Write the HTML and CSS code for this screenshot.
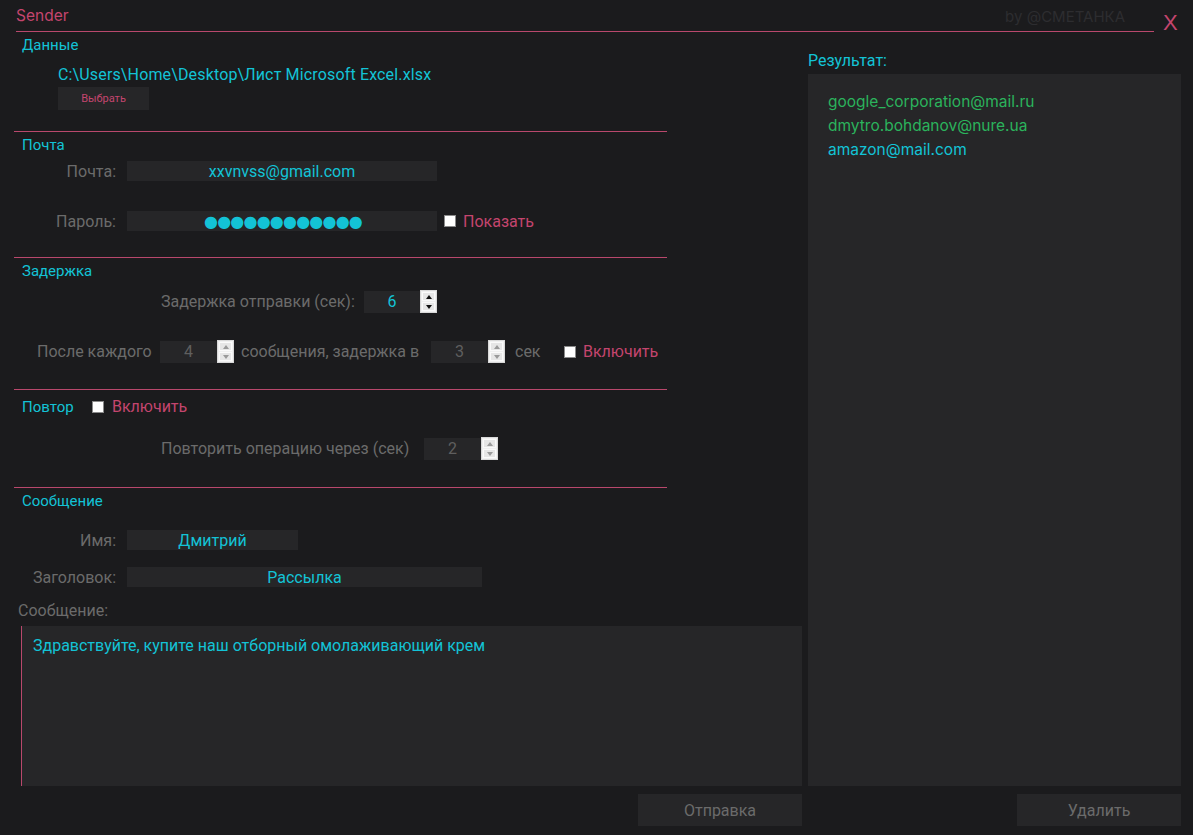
FILE: index.html
```html
<!DOCTYPE html>
<html lang="ru">
<head>
<meta charset="utf-8">
<title>Sender</title>
<link rel="stylesheet" href="styles.css">
</head>
<body>
<div class="app">
  <header class="header">
    <div class="title-block">
      <span class="title">Sender</span>
      <span class="author">by @СМЕТАНКА</span>
    </div>
    <div class="close">X</div>
  </header>
  <div class="main">
    <div class="left">
      <section class="section sec-data">
        <div class="heading">Данные</div>
        <div class="path">C:\Users\Home\Desktop\Лист Microsoft Excel.xlsx</div>
        <div class="btn-choose">Выбрать</div>
      </section>

      <section class="section sec-mail">
        <div class="heading">Почта</div>
        <div class="frow r-mail">
          <div class="flabel">Почта:</div>
          <div class="field w310">xxvnvss@gmail.com</div>
        </div>
        <div class="frow r-pass">
          <div class="flabel">Пароль:</div>
          <div class="field w310 dots">●●●●●●●●●●●●</div>
          <div class="check"></div>
          <div class="pink-label">Показать</div>
        </div>
      </section>

      <section class="section sec-delay">
        <div class="heading">Задержка</div>
        <div class="frow r-delay1">
          <div class="glabel w203">Задержка отправки (сек):</div>
          <div class="num w56 active">6</div>
          <div class="spin"><span class="up"></span><span class="down"></span></div>
        </div>
        <div class="frow r-delay2">
          <div class="glabel w123">После каждого</div>
          <div class="num w57">4</div>
          <div class="spin off"><span class="up"></span><span class="down"></span></div>
          <div class="glabel w190 ml7">сообщения, задержка в</div>
          <div class="num w57">3</div>
          <div class="spin off"><span class="up"></span><span class="down"></span></div>
          <div class="glabel w42 ml10">сек</div>
          <div class="check"></div>
          <div class="pink-label">Включить</div>
        </div>
      </section>

      <section class="section sec-repeat">
        <div class="frow r-rephead">
          <div class="heading inline">Повтор</div>
          <div class="check"></div>
          <div class="pink-label">Включить</div>
        </div>
        <div class="frow r-repeat">
          <div class="glabel w263">Повторить операцию через (сек)</div>
          <div class="num w57">2</div>
          <div class="spin off"><span class="up"></span><span class="down"></span></div>
        </div>
      </section>

      <section class="section sec-msg">
        <div class="heading">Сообщение</div>
        <div class="frow r-name">
          <div class="flabel">Имя:</div>
          <div class="field w171">Дмитрий</div>
        </div>
        <div class="frow r-subject">
          <div class="flabel">Заголовок:</div>
          <div class="field w355">Рассылка</div>
        </div>
      </section>
      <div class="msg-label">Сообщение:</div>
      <div class="textarea">Здравствуйте, купите наш отборный омолаживающий крем</div>
      <div class="btn-row">
        <div class="btn">Отправка</div>
      </div>
    </div>

    <div class="right">
      <div class="res-label">Результат:</div>
      <div class="res-panel">
        <div class="res-item ok">google_corporation@mail.ru</div>
        <div class="res-item ok">dmytro.bohdanov@nure.ua</div>
        <div class="res-item cur">amazon@mail.com</div>
      </div>
      <div class="btn-row">
        <div class="btn">Удалить</div>
      </div>
    </div>
  </div>
</div>
</body>
</html>
```

FILE: styles.css
```css
* { box-sizing: border-box; }

html, body {
  margin: 0;
  padding: 0;
  background: #1b1b1d;
}

body {
  width: 1193px;
  height: 835px;
  overflow: hidden;
  font-family: Roboto, "Liberation Sans", sans-serif;
  font-size: 16px;
  color: #6b6b6b;
}

.app {
  width: 1193px;
  height: 835px;
}

/* header */
.header {
  display: flex;
  padding-left: 16px;
  height: 32px;
}

.title-block {
  width: 1138px;
  height: 32px;
  border-bottom: 1px solid #b9486c;
  display: flex;
  justify-content: space-between;
  padding-top: 6px;
  padding-right: 29px;
}

.title {
  color: #c4456e;
  font-family: Inter, Roboto, sans-serif;
  font-size: 15.5px;
  line-height: 20px;
}

.author {
  color: #2d2d30;
  font-family: Inter, Roboto, sans-serif;
  font-size: 15px;
  line-height: 20px;
  padding-top: 1px;
}

.close {
  color: #c4456e;
  font-size: 22px;
  line-height: 24px;
  margin-left: 9px;
  padding-top: 11px;
  font-family: "Liberation Sans", sans-serif;
}

/* layout */
.main {
  display: flex;
  gap: 6px;
}

.left {
  width: 802px;
}

.right {
  width: 373px;
}

.section {
  margin-left: 14px;
  width: 653px;
  border-bottom: 1px solid #b9486c;
}

.heading {
  color: #13c3d6;
  font-size: 15px;
  line-height: 18px;
  padding-left: 8px;
}

.heading.inline {
  padding-left: 0;
  width: 70px;
}

.frow {
  display: flex;
  align-items: center;
}

.flabel {
  width: 102px;
  margin-right: 11px;
  text-align: right;
  color: #6b6b6b;
}

.glabel {
  color: #6b6b6b;
  white-space: nowrap;
}

.field {
  height: 20px;
  background: #262628;
  color: #13c3d6;
  display: flex;
  align-items: center;
  justify-content: center;
}

.w310 { width: 310px; }
.w171 { width: 171px; }
.w355 { width: 355px; }
.w203 { width: 203px; }
.w123 { width: 123px; }
.w190 { width: 190px; }
.w42 { width: 42px; }
.w263 { width: 263px; }
.w56 { width: 56px; }
.w57 { width: 57px; }
.ml7 { margin-left: 7px; }
.ml10 { margin-left: 10px; }

.dots {
  font-family: "DejaVu Sans", sans-serif;
  font-size: 16px;
  letter-spacing: -0.8px;
  padding-top: 1px;
  padding-left: 2px;
}

.check {
  width: 12px;
  height: 12px;
  background: #ffffff;
  border: 1px solid #8a8a8a;
  margin-left: 7px;
}

.pink-label {
  color: #c4456e;
  margin-left: 7px;
}

.num {
  height: 22px;
  background: #262628;
  color: #5f5f5f;
  font-size: 16px;
  display: flex;
  align-items: center;
  justify-content: center;
}

.num.active {
  color: #13c3d6;
}

.spin {
  width: 17px;
  height: 23px;
  background: #f0f0f0;
  border: 1px solid #d9d9d9;
  display: flex;
  flex-direction: column;
  padding: 1px;
  gap: 1px;
}

.spin span {
  flex: 1;
  background: #e6e6e6;
  border: 1px solid #fafafa;
  display: flex;
  align-items: center;
  justify-content: center;
}

.spin span::after {
  content: "";
  width: 0;
  height: 0;
  border-left: 3px solid transparent;
  border-right: 3px solid transparent;
}

.spin .up::after { border-bottom: 4px solid #111; }
.spin .down::after { border-top: 4px solid #111; }
.spin.off .up::after { border-bottom-color: #9a9a9a; }
.spin.off .down::after { border-top-color: #9a9a9a; }

/* sections */
.sec-data {
  height: 100px;
  padding-top: 4px;
}

.path {
  color: #13c3d6;
  line-height: 18px;
  margin-left: 44px;
  margin-top: 12px;
  letter-spacing: 0.15px;
}

.btn-choose {
  margin-left: 44px;
  margin-top: 3px;
  width: 91px;
  height: 23px;
  background: #262628;
  color: #c4456e;
  font-size: 11px;
  display: flex;
  align-items: center;
  justify-content: center;
}

.sec-mail {
  height: 126px;
  padding-top: 4px;
}

.r-mail { margin-top: 7px; }
.r-pass { margin-top: 30px; }

.sec-delay {
  height: 132px;
  padding-top: 4px;
}

.r-delay1 { margin-top: 10px; margin-left: 147px; }
.r-delay2 { margin-top: 27px; margin-left: 23px; }

.sec-repeat {
  height: 98px;
  padding-top: 7px;
}

.r-rephead { padding-left: 8px; }
.r-rephead .check { margin-left: 0; }
.r-rephead .pink-label { margin-left: 8px; }

.r-repeat { margin-top: 21px; margin-left: 147px; }

.sec-msg {
  border-bottom: none;
  padding-top: 4px;
}

.r-name { margin-top: 20px; }
.r-subject { margin-top: 17px; }

.msg-label {
  margin-top: 15px;
  margin-left: 18px;
  line-height: 18px;
  color: #6b6b6b;
}

.textarea {
  margin-top: 6px;
  margin-left: 21px;
  width: 781px;
  height: 160px;
  background: #262628;
  border-left: 1px solid #b9486c;
  color: #13c3d6;
  padding: 11px 11px;
  line-height: 18px;
}

.btn-row {
  display: flex;
  justify-content: flex-end;
  margin-top: 8px;
}

.btn {
  width: 164px;
  height: 32px;
  background: #262628;
  color: #6b6b6b;
  display: flex;
  align-items: center;
  justify-content: center;
}

/* right */
.res-label {
  color: #13c3d6;
  line-height: 18px;
  margin-top: 20px;
}

.res-panel {
  margin-top: 4px;
  height: 712px;
  background: #262628;
  padding: 16px 20px;
}

.res-item {
  font-family: Inter, Roboto, sans-serif;
  font-size: 15.5px;
  line-height: 24px;
}

.res-item.ok { color: #2bb35c; }
.res-item.cur { color: #13c3d6; }
```
